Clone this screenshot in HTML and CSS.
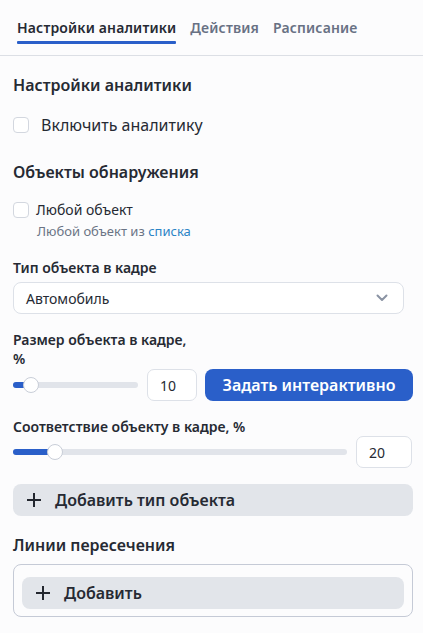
FILE: index.html
```html
<!DOCTYPE html>
<html lang="ru">
<head>
<meta charset="utf-8">
<link rel="stylesheet" href="styles.css">
</head>
<body>
<div class="tabs">
  <div class="tab active">Настройки аналитики</div>
  <div class="tab">Действия</div>
  <div class="tab">Расписание</div>
</div>
<div class="content">
  <h2 class="heading h-first">Настройки аналитики</h2>
  <label class="check-row big">
    <span class="checkbox"></span>
    <span>Включить аналитику</span>
  </label>

  <h2 class="heading h-second">Объекты обнаружения</h2>
  <label class="check-row small">
    <span class="checkbox"></span>
    <span>Любой объект</span>
  </label>
  <div class="hint">Любой объект из <span class="link">списка</span></div>

  <div class="field-label fl-type">Тип объекта в кадре</div>
  <div class="select">
    <span>Автомобиль</span>
    <svg class="chev" width="12" height="8" viewBox="0 0 12 8"><path d="M1.5 1.5 L6 6 L10.5 1.5" fill="none" stroke="#8a93a3" stroke-width="2" stroke-linecap="round" stroke-linejoin="round"/></svg>
  </div>

  <div class="size-grid">
    <div class="size-left">
      <div class="field-label fl-size">Размер объекта в кадре, %</div>
      <div class="slider-row">
        <div class="slider"><div class="fill" style="width:18px"></div><div class="thumb" style="left:18px"></div></div>
        <div class="num n1">10</div>
      </div>
    </div>
    <button class="primary">Задать интерактивно</button>
  </div>

  <div class="field-label fl-match">Соответствие объекту в кадре, %</div>
  <div class="slider-row">
    <div class="slider"><div class="fill" style="width:42px"></div><div class="thumb" style="left:42px"></div></div>
    <div class="num n2">20</div>
  </div>

  <button class="secondary add-type">
    <svg width="16" height="16" viewBox="0 0 16 16"><path d="M8 1 V15 M1 8 H15" stroke="#23272f" stroke-width="2"/></svg>
    <span>Добавить тип объекта</span>
  </button>

  <h2 class="heading h-third">Линии пересечения</h2>
  <div class="lines-box">
    <button class="secondary">
      <svg width="16" height="16" viewBox="0 0 16 16"><path d="M8 1 V15 M1 8 H15" stroke="#23272f" stroke-width="2"/></svg>
      <span>Добавить</span>
    </button>
  </div>
</div>
</body>
</html>
```

FILE: styles.css
```css
* { box-sizing: border-box; }
html, body {
  margin: 0;
  padding: 0;
  background: #fcfcfd;
  font-family: "Noto Sans", "Open Sans", sans-serif;
  color: #262a33;
}
.tabs {
  display: flex;
  gap: 14px;
  padding: 0 17px;
  height: 56px;
  border-bottom: 1px solid #dcdfe5;
  align-items: stretch;
}
.tab {
  font-size: 14px;
  font-weight: 600;
  color: #687184;
  line-height: 20px;
  padding-top: 18px;
  letter-spacing: 0.15px;
}
.tab.active {
  color: #262a33;
  position: relative;
}
.tab.active::after {
  content: "";
  position: absolute;
  left: 0;
  right: 0;
  top: 41px;
  height: 3px;
  background: #2a5fc9;
  border-radius: 1px;
}
.content {
  padding: 0 10px 20px 13px;
}
.heading {
  margin: 0;
  font-size: 16px;
  line-height: 24px;
  font-weight: 600;
  color: #262a33;
}
.h-first { margin-top: 17px; }
.h-second { margin-top: 23px; }
.h-third { margin-top: 17px; }
.check-row {
  display: flex;
  align-items: center;
}
.checkbox {
  width: 16px;
  height: 16px;
  border: 1px solid #d3d7df;
  border-radius: 4px;
  background: #fff;
  flex: none;
}
.check-row.big {
  margin-top: 16px;
  font-size: 16px;
  line-height: 24px;
  gap: 12px;
}
.check-row.small {
  margin-top: 16px;
  font-size: 14px;
  line-height: 20px;
  gap: 7px;
}
.hint {
  margin: 3px 0 0 24px;
  font-size: 13px;
  line-height: 17px;
  color: #6b7485;
}
.link { color: #2b84c6; }
.field-label {
  font-size: 14px;
  font-weight: 600;
  line-height: 19px;
  color: #262a33;
}
.fl-type { margin-top: 18px; }
.select {
  margin: 5px 9px 0 0;
  height: 32px;
  border: 1px solid #dde1e8;
  border-radius: 8px;
  background: #fff;
  display: flex;
  align-items: center;
  justify-content: space-between;
  padding: 0 15px 0 12px;
  font-size: 14px;
}
.size-grid {
  margin-top: 16px;
  display: grid;
  grid-template-columns: 1fr 208px;
  gap: 8px;
  align-items: end;
}
.fl-size { margin-bottom: 1px; }
.slider-row {
  display: flex;
  align-items: center;
  gap: 9px;
}
.slider {
  flex: 1;
  height: 6px;
  border-radius: 3px;
  background: #e1e4ea;
  position: relative;
}
.fill {
  position: absolute;
  left: 0; top: 0; bottom: 0;
  background: #2a5fc9;
  border-radius: 3px;
}
.thumb {
  position: absolute;
  top: 50%;
  width: 16px;
  height: 16px;
  margin: -8px 0 0 -8px;
  background: #fff;
  border: 1px solid #c9ced8;
  border-radius: 50%;
}
.num {
  height: 32px;
  border: 1px solid #dde1e8;
  border-radius: 7px;
  background: #fff;
  font-size: 14px;
  display: flex;
  align-items: center;
  padding-left: 12px;
  flex: none;
}
.n1 { width: 50px; }
.n2 { width: 56px; margin-right: 1px; }
.primary {
  height: 32px;
  border: none;
  border-radius: 8px;
  background: #2a5fc9;
  color: #fff;
  font-family: inherit;
  font-size: 16px;
  font-weight: 600;
  padding: 0;
}
.fl-match { margin-top: 16px; margin-bottom: 0; }
.secondary {
  display: flex;
  align-items: center;
  gap: 13px;
  width: 100%;
  height: 32px;
  border: none;
  border-radius: 8px;
  background: #e2e5ea;
  color: #262a33;
  font-family: inherit;
  font-size: 16px;
  font-weight: 600;
  padding: 0 0 0 13px;
}
.add-type { margin-top: 16px; }
.lines-box {
  margin-top: 7px;
  border: 1px solid #c5cad6;
  border-radius: 8px;
  padding: 12px 8px 7px;
}
```
